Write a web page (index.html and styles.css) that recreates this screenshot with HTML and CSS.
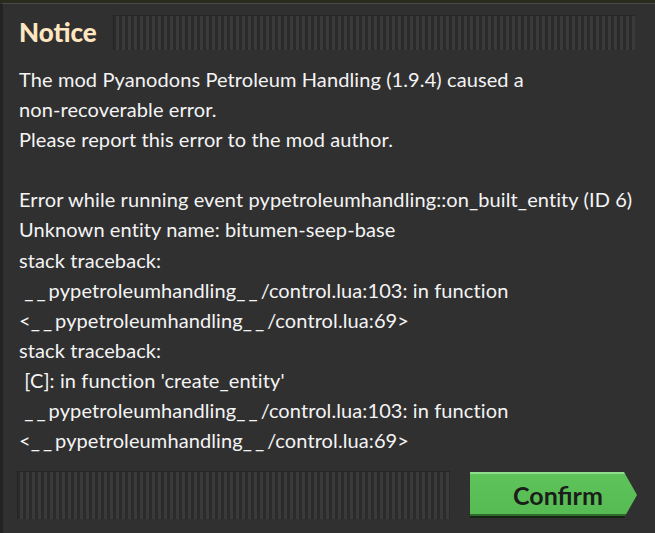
FILE: index.html
```html
<!DOCTYPE html>
<html>
<head>
<meta charset="utf-8">
<link rel="stylesheet" href="styles.css">
</head>
<body>
<div class="scene">
  <div class="frame">
    <div class="header">
      <div class="title">Notice</div>
      <div class="handle handle-top"></div>
    </div>
    <div class="content">
      <div class="line">The mod Pyanodons Petroleum Handling (1.9.4) caused a</div>
      <div class="line">non-recoverable error.</div>
      <div class="line">Please report this error to the mod author.</div>
      <div class="line">&nbsp;</div>
      <div class="line">Error while running event pypetroleumhandling::on_built_entity (ID 6)</div>
      <div class="line">Unknown entity name: bitumen-seep-base</div>
      <div class="line">stack traceback:</div>
      <div class="line">&nbsp;<span class="us">__</span>pypetroleumhandling<span class="us">__</span>/control.lua:103: in function</div>
      <div class="line">&lt;<span class="us">__</span>pypetroleumhandling<span class="us">__</span>/control.lua:69&gt;</div>
      <div class="line">stack traceback:</div>
      <div class="line">&nbsp;[C]: in function 'create_entity'</div>
      <div class="line">&nbsp;<span class="us">__</span>pypetroleumhandling<span class="us">__</span>/control.lua:103: in function</div>
      <div class="line">&lt;<span class="us">__</span>pypetroleumhandling<span class="us">__</span>/control.lua:69&gt;</div>
    </div>
    <div class="footer">
      <div class="handle handle-bottom"></div>
      <div class="confirm">Confirm</div>
    </div>
  </div>
</div>
</body>
</html>
```
FILE: styles.css
```css
html, body {
  margin: 0;
  padding: 0;
  width: 655px;
  height: 533px;
  overflow: hidden;
  background: #2a2b1f;
}
.scene {
  padding-top: 3px;
  height: 530px;
}
.frame {
  box-sizing: border-box;
  height: 530px;
  background: #313031;
  border-top: 1px solid #4b4a4a;
  border-left: 3px solid #242323;
  display: flex;
  flex-direction: column;
  font-family: "Lato", sans-serif;
}
.header {
  display: flex;
  align-items: center;
  padding: 11px 20px 0 16px;
  gap: 17px;
}
.title {
  font-family: "Lato", sans-serif;
  font-weight: 900;
  font-size: 26px;
  color: #ffe6c0;
  line-height: 35px;
  width: 77px;
}
.handle {
  flex: 1;
  background: repeating-linear-gradient(90deg, #2b2b2b 0 3px, #3a3a3a 3px 6px);
  box-shadow: inset 0 1px 0 #262626, inset 1px 0 0 #262626;
}
.handle-top {
  height: 35px;
}
.content {
  padding: 14px 0 0 16px;
  color: #f4f4f4;
  font-size: 20px;
  letter-spacing: 0.1px;
}
.line {
  line-height: 30.1px;
  height: 30.1px;
  white-space: pre;
}
.us {
  letter-spacing: 3px;
}
.footer {
  margin-top: auto;
  display: flex;
  align-items: center;
  padding: 0 18px 14px 14px;
  gap: 20px;
}
.handle-bottom {
  height: 48px;
}
.confirm {
  width: 167px;
  height: 46px;
  box-sizing: border-box;
  padding-right: 13px;
  display: flex;
  align-items: center;
  justify-content: center;
  padding-left: 22px;
  font-weight: 700;
  font-size: 25px;
  color: #1a1d19;
  background: linear-gradient(180deg, #8fdc8c 0 2px, #5fc35c 2px, #56bb53 calc(100% - 4px), #2e6a2b calc(100% - 4px) calc(100% - 2px), #142513 calc(100% - 2px));
  clip-path: polygon(0 0, calc(100% - 13px) 0, 100% 50%, calc(100% - 13px) 100%, 0 100%);
}
```
